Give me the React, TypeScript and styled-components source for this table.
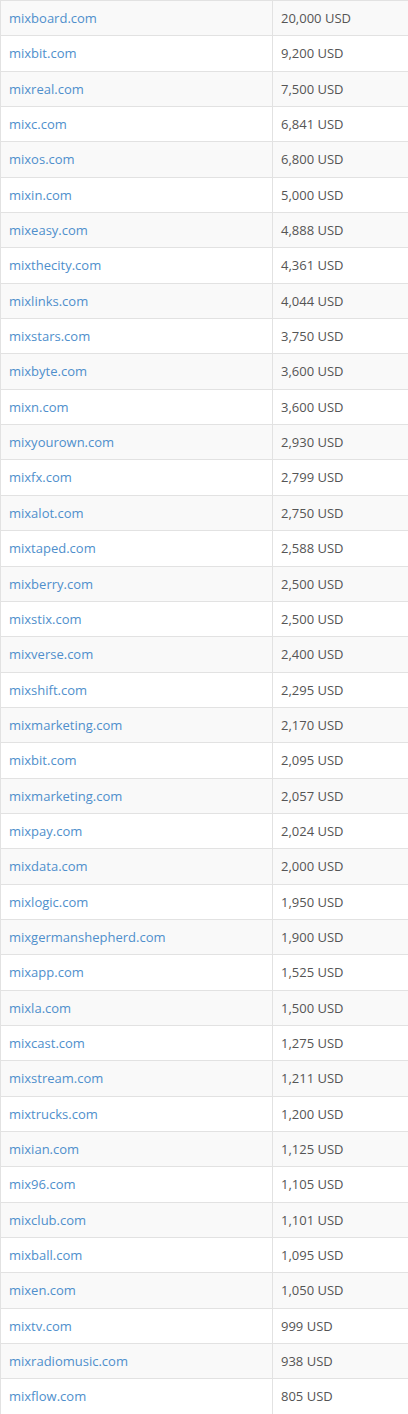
import React from "react";
import styled, { createGlobalStyle } from "styled-components";

const GlobalStyle = createGlobalStyle`
  html, body {
    margin: 0;
    padding: 0;
    background: #fff;
    overflow: hidden;
  }
  body {
    font-family: "Open Sans", "Liberation Sans", sans-serif;
  }
`;

const Wrapper = styled.div`
  width: 420px;
`;

const Table = styled.table`
  width: 100%;
  border-collapse: collapse;
  border-spacing: 0;
  font-size: 13px;
  color: #555;
`;

const Row = styled.tr<{ $striped: boolean }>`
  background: ${({ $striped }) => ($striped ? "#f9f9f9" : "#fff")};
`;

const Cell = styled.td<{ $wide?: boolean }>`
  width: ${({ $wide }) => ($wide ? "255px" : "auto")};
  height: 18.35px;
  padding: 8px 8px;
  line-height: 18.35px;
  border-top: 1px solid #e2e2e2;
  border-left: 1px solid #e2e2e2;
  vertical-align: top;
  white-space: nowrap;
`;

const DomainLink = styled.a`
  color: #4f8fcc;
  text-decoration: none;
`;

const domains: [string, string][] = [
  ["mixboard.com", "20,000"],
  ["mixbit.com", "9,200"],
  ["mixreal.com", "7,500"],
  ["mixc.com", "6,841"],
  ["mixos.com", "6,800"],
  ["mixin.com", "5,000"],
  ["mixeasy.com", "4,888"],
  ["mixthecity.com", "4,361"],
  ["mixlinks.com", "4,044"],
  ["mixstars.com", "3,750"],
  ["mixbyte.com", "3,600"],
  ["mixn.com", "3,600"],
  ["mixyourown.com", "2,930"],
  ["mixfx.com", "2,799"],
  ["mixalot.com", "2,750"],
  ["mixtaped.com", "2,588"],
  ["mixberry.com", "2,500"],
  ["mixstix.com", "2,500"],
  ["mixverse.com", "2,400"],
  ["mixshift.com", "2,295"],
  ["mixmarketing.com", "2,170"],
  ["mixbit.com", "2,095"],
  ["mixmarketing.com", "2,057"],
  ["mixpay.com", "2,024"],
  ["mixdata.com", "2,000"],
  ["mixlogic.com", "1,950"],
  ["mixgermanshepherd.com", "1,900"],
  ["mixapp.com", "1,525"],
  ["mixla.com", "1,500"],
  ["mixcast.com", "1,275"],
  ["mixstream.com", "1,211"],
  ["mixtrucks.com", "1,200"],
  ["mixian.com", "1,125"],
  ["mix96.com", "1,105"],
  ["mixclub.com", "1,101"],
  ["mixball.com", "1,095"],
  ["mixen.com", "1,050"],
  ["mixtv.com", "999"],
  ["mixradiomusic.com", "938"],
  ["mixflow.com", "805"],
];

export default function App() {
  return (
    <Wrapper>
      <GlobalStyle />
      <Table>
        <tbody>
          {domains.map(([name, price], i) => (
            <Row key={i} $striped={i % 2 === 0}>
              <Cell $wide>
                <DomainLink href="#">{name}</DomainLink>
              </Cell>
              <Cell>{price} USD</Cell>
            </Row>
          ))}
        </tbody>
      </Table>
    </Wrapper>
  );
}
